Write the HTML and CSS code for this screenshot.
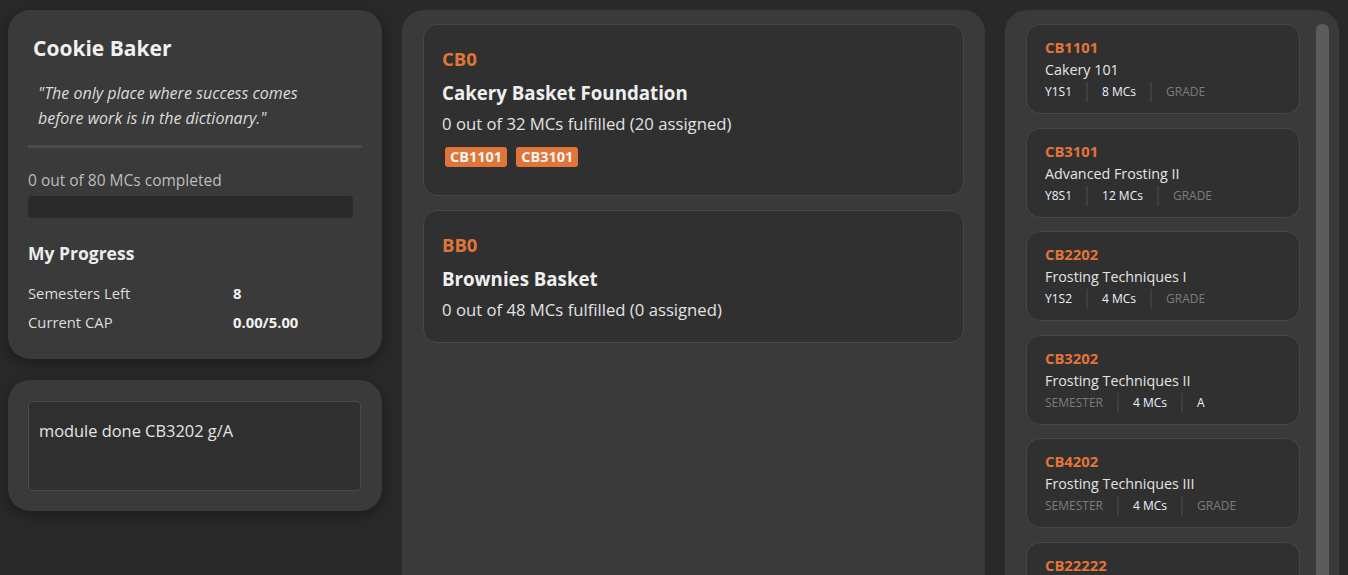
FILE: index.html
```html
<!DOCTYPE html>
<html>
<head>
<meta charset="utf-8">
<link rel="stylesheet" href="styles.css">
</head>
<body>
<div class="app">
  <div class="left">
    <div class="card profile">
      <h1 class="name">Cookie Baker</h1>
      <p class="quote">"The only place where success comes before work is in the dictionary."</p>
      <div class="sep"></div>
      <div class="completed">0 out of 80 MCs completed</div>
      <div class="bar"><div class="fill" style="width:0%"></div></div>
      <h2 class="progress-title">My Progress</h2>
      <div class="stat"><span class="label">Semesters Left</span><span class="value">8</span></div>
      <div class="stat"><span class="label">Current CAP</span><span class="value">0.00/5.00</span></div>
    </div>
    <div class="card command">
      <div class="input">module done CB3202 g/A</div>
    </div>
  </div>
  <div class="panel middle">
    <div class="req">
      <div class="req-code">CB0</div>
      <div class="req-name">Cakery Basket Foundation</div>
      <div class="req-info">0 out of 32 MCs fulfilled (20 assigned)</div>
      <div class="tags"><span class="tag">CB1101</span><span class="tag">CB3101</span></div>
    </div>
    <div class="req">
      <div class="req-code">BB0</div>
      <div class="req-name">Brownies Basket</div>
      <div class="req-info">0 out of 48 MCs fulfilled (0 assigned)</div>
    </div>
  </div>
  <div class="panel right">
    <div class="list">
      <div class="mod">
        <div class="mod-code">CB1101</div>
        <div class="mod-name">Cakery 101</div>
        <div class="meta"><span>Y1S1</span><span>8 MCs</span><span class="dim">GRADE</span></div>
      </div>
      <div class="mod">
        <div class="mod-code">CB3101</div>
        <div class="mod-name">Advanced Frosting II</div>
        <div class="meta"><span>Y8S1</span><span>12 MCs</span><span class="dim">GRADE</span></div>
      </div>
      <div class="mod">
        <div class="mod-code">CB2202</div>
        <div class="mod-name">Frosting Techniques I</div>
        <div class="meta"><span>Y1S2</span><span>4 MCs</span><span class="dim">GRADE</span></div>
      </div>
      <div class="mod">
        <div class="mod-code">CB3202</div>
        <div class="mod-name">Frosting Techniques II</div>
        <div class="meta"><span class="dim">SEMESTER</span><span>4 MCs</span><span>A</span></div>
      </div>
      <div class="mod">
        <div class="mod-code">CB4202</div>
        <div class="mod-name">Frosting Techniques III</div>
        <div class="meta"><span class="dim">SEMESTER</span><span>4 MCs</span><span class="dim">GRADE</span></div>
      </div>
      <div class="mod">
        <div class="mod-code">CB22222</div>
      </div>
    </div>
    <div class="scrollbar"><div class="thumb"></div></div>
  </div>
</div>
</body>
</html>
```
FILE: styles.css
```css
* { box-sizing: border-box; }
html, body { margin: 0; padding: 0; }
body {
  background: #292929;
  font-family: "Open Sans", "Noto Sans", sans-serif;
  color: #e8e8e8;
  height: 575px;
  overflow: hidden;
}
.app {
  display: flex;
  gap: 20px;
  padding: 10px 8px 0 8px;
  height: 575px;
  align-items: flex-start;
}
.left {
  width: 374px;
  display: flex;
  flex-direction: column;
  gap: 21px;
}
.card {
  background: #3a3a3a;
  border-radius: 22px;
  box-shadow: 0 4px 14px rgba(0,0,0,0.35);
}
.profile {
  height: 349px;
  padding: 24px 20px 0 20px;
}
.name {
  margin: 0 0 0 5px;
  font-size: 21px;
  font-weight: 700;
  line-height: 28px;
  color: #f0f0f0;
}
.quote {
  margin: 19px 0 0 10px;
  width: 285px;
  font-style: italic;
  font-size: 16px;
  line-height: 25px;
  color: #dcdcdc;
}
.sep {
  margin-top: 14px;
  height: 3px;
  background: #4b4b4b;
  border-radius: 1px;
  width: 334px;
}
.completed {
  margin-top: 22px;
  font-size: 15.5px;
  color: #bdbdbd;
  line-height: 20px;
}
.bar {
  margin-top: 6px;
  width: 325px;
  height: 22px;
  background: #2a2a2a;
  border-radius: 4px;
  overflow: hidden;
}
.fill { height: 100%; background: #e07538; }
.progress-title {
  margin: 23px 0 0 0;
  font-size: 17.5px;
  font-weight: 700;
  line-height: 24px;
  color: #ececec;
}
.stat {
  display: flex;
  font-size: 14.8px;
  line-height: 29px;
  color: #dedede;
}
.progress-title + .stat { margin-top: 14px; }
.stat .label { width: 205px; }
.stat .value { font-weight: 700; color: #f2f2f2; }
.command {
  height: 131px;
  padding: 21px 21px 0 20px;
}
.input {
  height: 90px;
  background: #2f2f2f;
  border: 1px solid #4a4a4a;
  border-radius: 4px;
  padding: 18px 10px;
  font-size: 16.4px;
  line-height: 22px;
  color: #e4e4e4;
}
.panel {
  background: #3a3a3a;
  border-radius: 22px 22px 0 0;
  height: 600px;
}
.middle {
  width: 583px;
  padding: 14px 21px;
  display: flex;
  flex-direction: column;
  gap: 14px;
}
.req {
  flex-shrink: 0;
  background: #303030;
  border: 1px solid #474747;
  border-radius: 14px;
  padding: 21px 18px 28px 18px;
}
.req + .req { padding-bottom: 20px; }
.req-code {
  color: #e07538;
  font-weight: 700;
  font-size: 18.5px;
  line-height: 26px;
}
.req-name {
  margin-top: 8px;
  font-weight: 700;
  font-size: 18.7px;
  line-height: 26px;
  color: #efefef;
}
.req-info {
  margin-top: 6px;
  font-size: 16.7px;
  line-height: 24px;
  color: #e2e2e2;
}
.tags {
  margin-top: 11px;
  display: flex;
  gap: 9px;
  padding-left: 3px;
}
.tag {
  background: #e07538;
  color: #f4f4f4;
  font-weight: 700;
  font-size: 14.5px;
  line-height: 20px;
  padding: 0 5px;
  border-radius: 3px;
}
.right {
  width: 334px;
  padding: 14px 10px 0 21px;
  display: flex;
  gap: 16px;
}
.list {
  width: 274px;
  display: flex;
  flex-direction: column;
  gap: 13.6px;
}
.mod {
  flex-shrink: 0;
  height: 90px;
  background: #303030;
  border: 1px solid #474747;
  border-radius: 14px;
  padding: 11px 18px 0 18px;
}
.mod-code {
  color: #e07538;
  font-weight: 700;
  font-size: 14.8px;
  line-height: 22px;
}
.mod-name {
  margin-top: 1px;
  font-size: 14.3px;
  line-height: 22px;
  color: #e4e4e4;
}
.meta {
  margin-top: 1px;
  display: flex;
  align-items: center;
  font-size: 12px;
  line-height: 20px;
  color: #eaf2ff;
}
.meta span { padding: 0 14px; border-left: 2px solid #3e3e3e; }
.meta span:first-child { padding-left: 0; border-left: none; }
.meta .dim { color: #7c7c7c; }
.scrollbar {
  width: 13px;
}
.thumb {
  width: 13px;
  height: 600px;
  background: #5c5c5c;
  border-radius: 6px 6px 0 0;
}
```
